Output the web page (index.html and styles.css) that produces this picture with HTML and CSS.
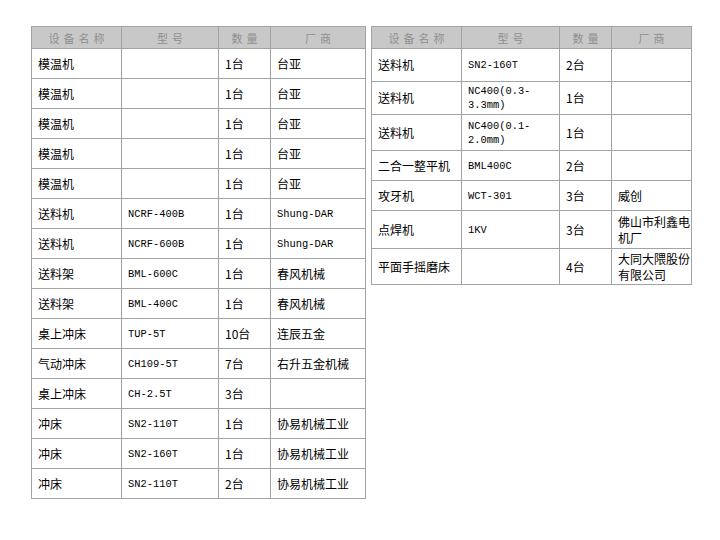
FILE: index.html
```html
<!DOCTYPE html>
<html lang="zh">
<head>
<meta charset="utf-8">
<link rel="stylesheet" href="styles.css">
</head>
<body>
<div class="page">
  <table class="grid left">
    <colgroup><col class="c1"><col class="c2"><col class="c3"><col class="c4"></colgroup>
    <thead>
      <tr><th>设备名称</th><th>型号</th><th>数量</th><th>厂商</th></tr>
    </thead>
    <tbody>
      <tr><td>模温机</td><td class="m"></td><td>1台</td><td>台亚</td></tr>
      <tr><td>模温机</td><td class="m"></td><td>1台</td><td>台亚</td></tr>
      <tr><td>模温机</td><td class="m"></td><td>1台</td><td>台亚</td></tr>
      <tr><td>模温机</td><td class="m"></td><td>1台</td><td>台亚</td></tr>
      <tr><td>模温机</td><td class="m"></td><td>1台</td><td>台亚</td></tr>
      <tr><td>送料机</td><td class="m">NCRF-400B</td><td>1台</td><td class="m">Shung-DAR</td></tr>
      <tr><td>送料机</td><td class="m">NCRF-600B</td><td>1台</td><td class="m">Shung-DAR</td></tr>
      <tr><td>送料架</td><td class="m">BML-600C</td><td>1台</td><td>春风机械</td></tr>
      <tr><td>送料架</td><td class="m">BML-400C</td><td>1台</td><td>春风机械</td></tr>
      <tr><td>桌上冲床</td><td class="m">TUP-5T</td><td>10台</td><td>连辰五金</td></tr>
      <tr><td>气动冲床</td><td class="m">CH109-5T</td><td>7台</td><td>右升五金机械</td></tr>
      <tr><td>桌上冲床</td><td class="m">CH-2.5T</td><td>3台</td><td></td></tr>
      <tr><td>冲床</td><td class="m">SN2-110T</td><td>1台</td><td>协易机械工业</td></tr>
      <tr><td>冲床</td><td class="m">SN2-160T</td><td>1台</td><td>协易机械工业</td></tr>
      <tr><td>冲床</td><td class="m">SN2-110T</td><td>2台</td><td>协易机械工业</td></tr>
    </tbody>
  </table>

  <table class="grid right">
    <colgroup><col class="r1"><col class="r2"><col class="r3"><col class="r4"></colgroup>
    <thead>
      <tr><th>设备名称</th><th>型号</th><th>数量</th><th>厂商</th></tr>
    </thead>
    <tbody>
      <tr class="h33"><td>送料机</td><td class="m">SN2-160T</td><td>2台</td><td></td></tr>
      <tr class="h33"><td>送料机</td><td class="m">NC400(0.3-<br>3.3mm)</td><td>1台</td><td></td></tr>
      <tr class="h36"><td>送料机</td><td class="m">NC400(0.1-<br>2.0mm)</td><td>1台</td><td></td></tr>
      <tr class="h30"><td>二合一整平机</td><td class="m">BML400C</td><td>2台</td><td></td></tr>
      <tr class="h30"><td>攻牙机</td><td class="m">WCT-301</td><td>3台</td><td>威创</td></tr>
      <tr class="h38"><td>点焊机</td><td class="m">1KV</td><td>3台</td><td class="wrap">佛山市利鑫电机厂</td></tr>
      <tr class="h36"><td>平面手摇磨床</td><td class="m"></td><td>4台</td><td class="wrap">大同大隈股份有限公司</td></tr>
    </tbody>
  </table>
</div>
</body>
</html>
```

FILE: styles.css
```css
html, body {
  margin: 0;
  padding: 0;
  background: #ffffff;
}

.page {
  display: flex;
  align-items: flex-start;
  gap: 5px;
  padding: 26px 0 0 31px;
  font-family: "Noto Sans CJK SC", "Liberation Mono", sans-serif;
  font-size: 12px;
  color: #000;
}

.grid {
  border-collapse: collapse;
  table-layout: fixed;
}

.grid th,
.grid td {
  border: 1px solid #a3a3a3;
  padding: 0 4px 0 6px;
  vertical-align: middle;
  text-align: left;
  overflow: hidden;
}

.grid th {
  height: 21px;
  background: #c8c8c8;
  color: #8f8f8f;
  font-weight: normal;
  font-size: 11px;
  letter-spacing: 4px;
  text-align: center;
  padding: 0 0 0 4px;
}

.grid td {
  height: 29px;
  line-height: 16px;
}

.grid td.m {
  font-family: "Liberation Mono", monospace;
  font-size: 10.4px;
  line-height: 14px;
}

.grid td.wrap {
  line-height: 16px;
  padding-right: 0;
}

.left { width: 334px; }
.c1 { width: 90px; }
.c2 { width: 97px; }
.c3 { width: 52px; }
.c4 { width: 95px; }

.right { width: 320px; }
.r1 { width: 90px; }
.r2 { width: 98px; }
.r3 { width: 52px; }
.r4 { width: 80px; }

.right tr.h30 td { height: 29px; }
.right tr.h33 td { height: 32px; }
.right tr.h36 td { height: 35px; }
.right tr.h38 td { height: 37px; }
```
